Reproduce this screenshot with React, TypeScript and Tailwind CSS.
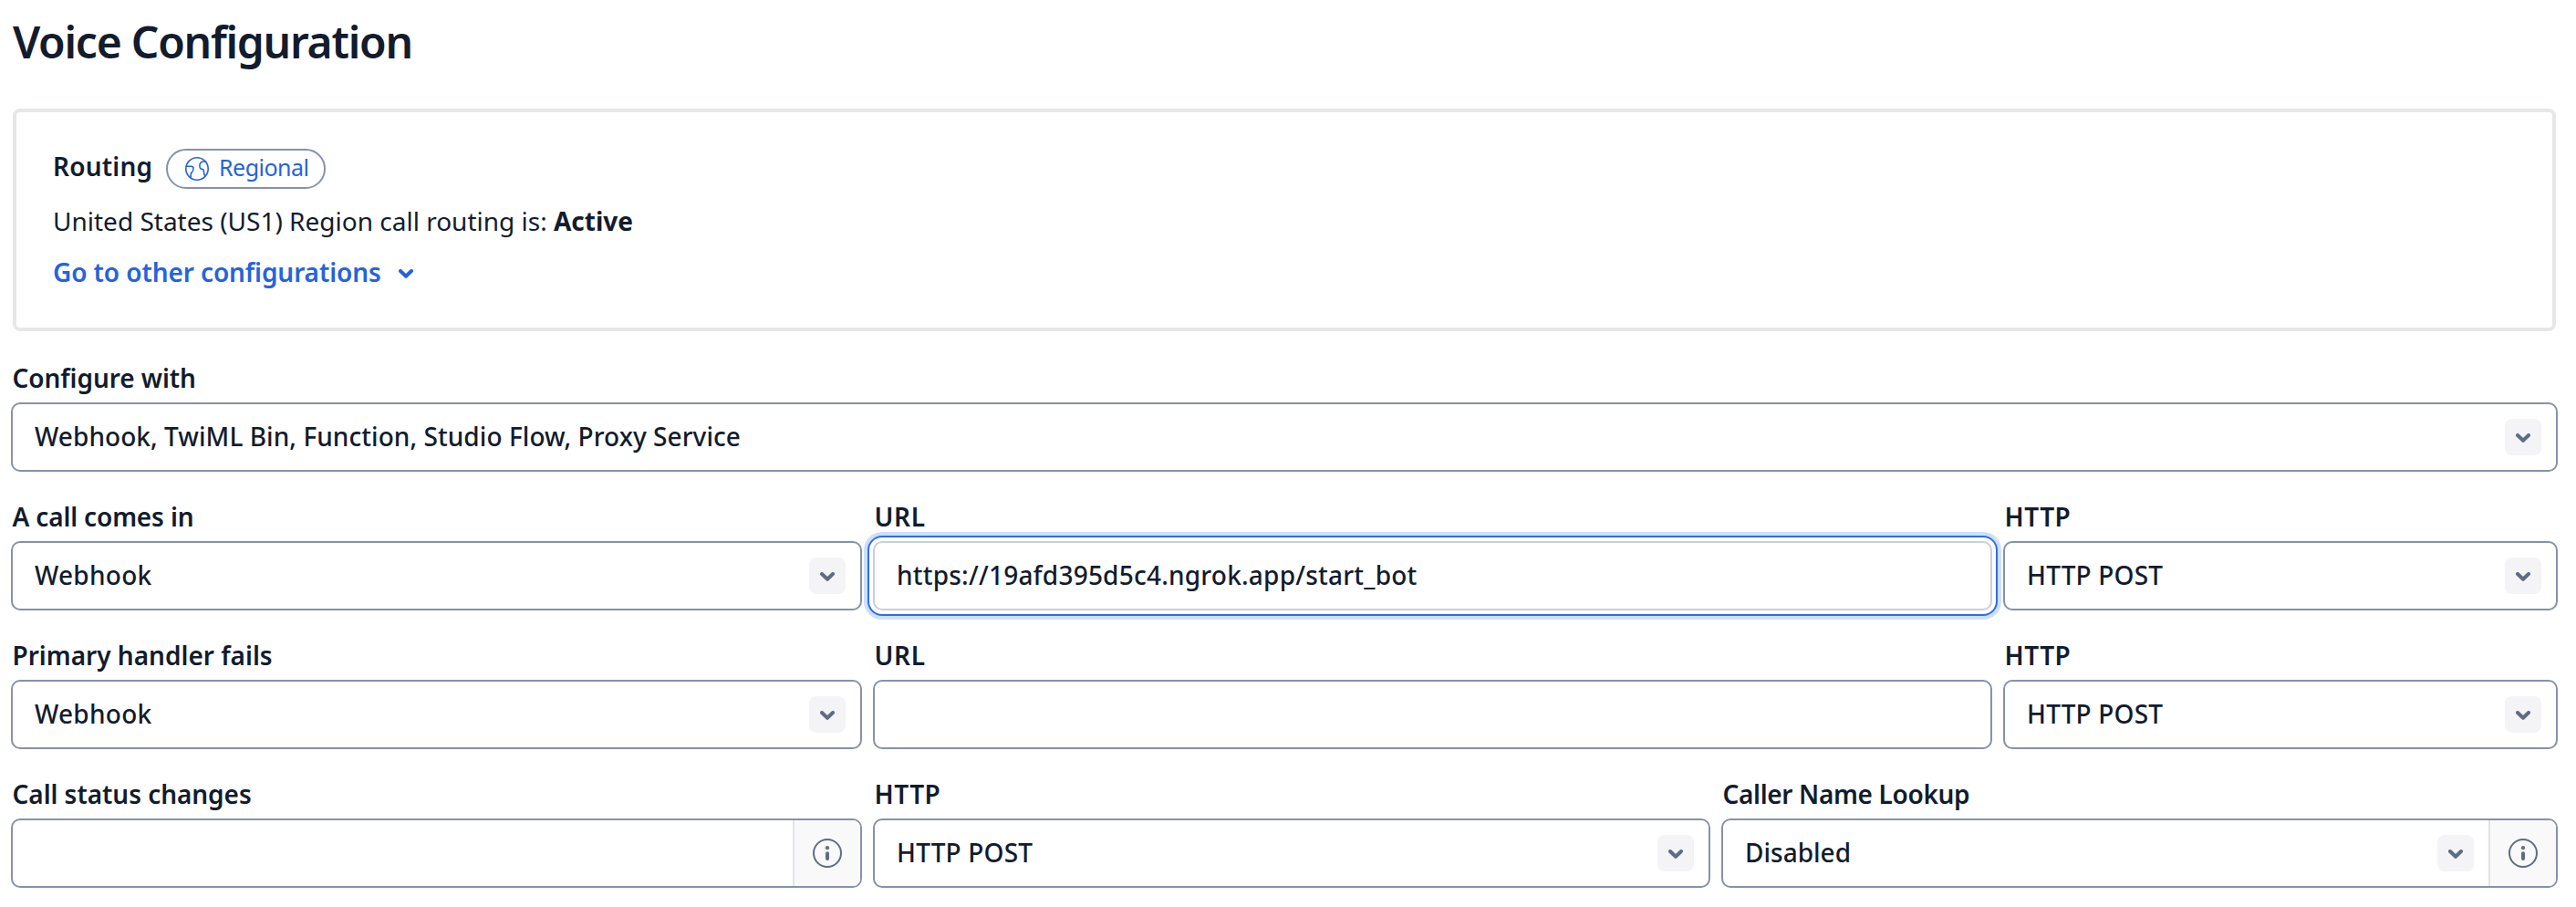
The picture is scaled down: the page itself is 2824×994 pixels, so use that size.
import type { ReactNode } from 'react';

function ChevronDown({ className = '' }: { className?: string }) {
  return (
    <svg viewBox="0 0 16 10" className={`h-[10px] w-4 ${className}`} fill="none" stroke="currentColor" strokeWidth="4" strokeLinecap="round" strokeLinejoin="round">
      <path d="M2 2 L8 7.8 L14 2" />
    </svg>
  );
}

function ChevronBox() {
  return (
    <div className="mr-4 flex size-10 shrink-0 items-center justify-center rounded-lg bg-[#f4f4f6] pt-[2px] text-[#606b85]">
      <ChevronDown />
    </div>
  );
}

function GlobeIcon() {
  return (
    <svg viewBox="0 0 26 26" className="size-[26px]" fill="none" stroke="currentColor" strokeWidth="1.6" strokeLinecap="round" strokeLinejoin="round">
      <circle cx="13" cy="13" r="12.2" />
      <path d="M1.4 10.3 H6.6 C8.3 10.3 9 11.1 9 12.6 C9 14.4 8.8 15.5 7.6 16.5 C6.2 17.6 6.2 18.3 6.2 19.6 V22.6" />
      <path d="M22.6 5.2 C19.8 4.8 16.6 5.4 16 8.4 C15.5 11.1 16.4 13.1 18.4 13.3 C20 13.4 20.5 14 20.4 15.7 C20.3 17.9 20.9 19.3 21.8 21" />
    </svg>
  );
}

function InfoAddon() {
  return (
    <div className="flex w-[74px] shrink-0 items-center justify-center self-stretch rounded-r-lg border-l-2 border-[#e1e3ea] bg-[#f9f9f9] text-[#606b85]">
      <svg viewBox="0 0 32 32" className="size-8" fill="none" stroke="currentColor">
        <circle cx="16" cy="16" r="15" strokeWidth="2" />
        <circle cx="16" cy="10.2" r="2.1" fill="currentColor" stroke="none" />
        <path d="M16 16.2 V22" strokeWidth="4" strokeLinecap="round" />
      </svg>
    </div>
  );
}

type FieldProps = {
  label: string;
  labelClass?: string;
  value?: string;
  valueClass?: string;
  className: string;
  select?: boolean;
  info?: boolean;
  focused?: boolean;
};

function Field({ label, labelClass = '', value = '', valueClass = '', className, select, info, focused }: FieldProps) {
  const box = focused
    ? 'border-[#caced8] shadow-[0_0_0_4px_#ffffff,0_0_0_6px_#2e6bef,0_0_0_10px_#cce0fc]'
    : 'border-[#8891aa]';
  return (
    <div className={`flex flex-col ${className}`}>
      <div className={`mb-[7px] h-10 whitespace-nowrap pl-[1.5px] text-[28px] leading-10 font-semibold ${labelClass}`}>{label}</div>
      <div className={`flex h-[76px] items-center rounded-[10px] border-2 bg-white ${box}`}>
        <div className={`min-w-0 flex-1 whitespace-nowrap pb-[2px] pl-6 text-[28px] leading-10 font-medium ${valueClass}`}>{value}</div>
        {select && <ChevronBox />}
        {info && <InfoAddon />}
      </div>
    </div>
  );
}

function Row({ children }: { children: ReactNode }) {
  return <div className="flex gap-3">{children}</div>;
}

export default function App() {
  return (
    <main className="flex h-[994px] w-[2824px] flex-col overflow-hidden bg-white pl-3 font-['Noto_Sans',sans-serif] text-[#121c2d]">
      <h1 className="ml-[2px] mt-[14px] h-16 text-[48px] leading-[64px] font-semibold tracking-[-1.24px]">Voice Configuration</h1>

      <section className="ml-[2px] mt-[41px] h-[244px] w-[2788px] rounded-[8px] border-4 border-[#e6e7e8] pl-10 pt-10">
        <div className="flex h-11 items-center">
          <h2 className="mb-[6px] w-[124px] text-[28px] leading-10 font-semibold tracking-[0.2px]">Routing</h2>
          <div className="flex h-11 w-[175px] items-center rounded-full border-2 border-[#8891aa] pl-[19px] text-[#2563dc]">
            <GlobeIcon />
            <span className="mb-[4px] ml-[11px] text-[25px] leading-10 tracking-[-0.5px]">Regional</span>
          </div>
        </div>
        <p className="mt-[15px] whitespace-nowrap text-[28px] leading-10">
          United States (US1) Region call routing is: <strong className="font-bold">Active</strong>
        </p>
        <div className="mt-4 flex h-10 items-center text-[#2563dc]">
          <span className="w-[379px] whitespace-nowrap text-[28px] leading-10 font-semibold tracking-[-0.1px]">Go to other configurations</span>
          <ChevronDown className="mt-[4px]" />
        </div>
      </section>

      <form className="mt-[31px] flex flex-col gap-[29px]">
        <Row>
          <Field className="w-[2792px]" label="Configure with" labelClass="tracking-[-0.07px]" value="Webhook, TwiML Bin, Function, Studio Flow, Proxy Service" valueClass="tracking-[0.06px]" select />
        </Row>
        <Row>
          <Field className="w-[933px]" label="A call comes in" labelClass="tracking-[-0.15px]" value="Webhook" valueClass="tracking-[0.25px]" select />
          <Field className="w-[1227px]" label="URL" labelClass="tracking-[0.7px]" value="https://19afd395d5c4.ngrok.app/start_bot" valueClass="tracking-[0.22px]" focused />
          <Field className="w-[608px]" label="HTTP" labelClass="tracking-[0.5px]" value="HTTP POST" valueClass="tracking-[0.2px]" select />
        </Row>
        <Row>
          <Field className="w-[933px]" label="Primary handler fails" value="Webhook" valueClass="tracking-[0.25px]" select />
          <Field className="w-[1227px]" label="URL" labelClass="tracking-[0.7px]" />
          <Field className="w-[608px]" label="HTTP" labelClass="tracking-[0.5px]" value="HTTP POST" valueClass="tracking-[0.2px]" select />
        </Row>
        <Row>
          <Field className="w-[933px]" label="Call status changes" labelClass="tracking-[-0.05px]" info />
          <Field className="w-[918px]" label="HTTP" labelClass="tracking-[0.5px]" value="HTTP POST" valueClass="tracking-[0.2px]" select />
          <Field className="w-[917px]" label="Caller Name Lookup" labelClass="tracking-[-0.33px]" value="Disabled" select info />
        </Row>
      </form>
    </main>
  );
}
